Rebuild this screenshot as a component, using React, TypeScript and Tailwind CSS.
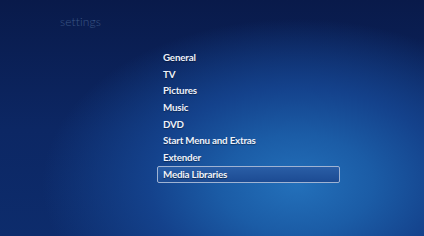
import React from "react";

const items = [
  "General",
  "TV",
  "Pictures",
  "Music",
  "DVD",
  "Start Menu and Extras",
  "Extender",
  "Media Libraries",
];

export default function App() {
  return (
    <div
      className="relative w-[424px] h-[236px] overflow-hidden bg-[#0b2258] bg-[radial-gradient(ellipse_60%_70%_at_70%_78%,#2370ba_0%,#1b5ca6_30%,#14428c_58%,rgba(11,34,88,0)_100%),linear-gradient(180deg,#091a4a_0%,#0c2764_55%,#0d2c6c_100%)]"
      style={{ fontFamily: "Lato, 'Open Sans', 'Liberation Sans', sans-serif" }}
    >
      <div className="h-[49px] pl-[60px] pt-[15px]">
        <div className="text-[12px] leading-[14px] font-light text-[#3a5686] tracking-[0.1px]">
          settings
        </div>
      </div>
      <div className="flex flex-col">
        {items.map((label, i) => {
          const selected = i === items.length - 1;
          return (
            <div
              key={label}
              className={
                selected
                  ? "ml-[157px] w-[183px] h-[16.7px] flex items-center pl-[5px] border border-[#9fb3d3] rounded-[2px] bg-[linear-gradient(180deg,#2a5ea6_0%,#1c4b93_100%)] text-[9.8px] tracking-[-0.2px] font-bold text-[#f2f5fb] [text-shadow:0_1px_1px_rgba(0,0,0,0.5)]"
                  : "ml-[157px] w-[183px] h-[16.7px] flex items-center pl-[5px] border border-transparent text-[9.8px] tracking-[-0.2px] font-bold text-[#eef2fa] [text-shadow:0_1px_1px_rgba(0,0,0,0.4)]"
              }
            >
              {label}
            </div>
          );
        })}
      </div>
    </div>
  );
}
